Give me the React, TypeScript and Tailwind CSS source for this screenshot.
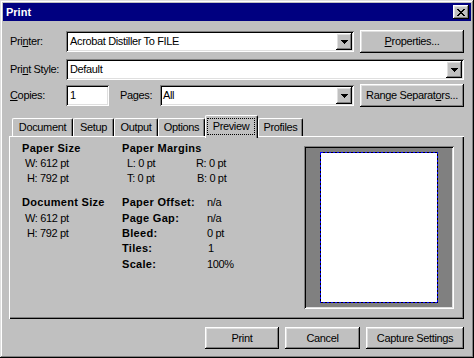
import React from "react";

const raised =
  "shadow-[inset_-1px_-1px_#000,inset_1px_1px_#fff,inset_-2px_-2px_#808080,inset_2px_2px_#dfdfdf]";
const sunken =
  "shadow-[inset_1px_1px_#808080,inset_-1px_-1px_#fff,inset_2px_2px_#000,inset_-2px_-2px_#dfdfdf]";

function Arrow() {
  return (
    <svg width="7" height="4" viewBox="0 0 7 4" shapeRendering="crispEdges">
      <path d="M0 0h7v1H0zM1 1h5v1H1zM2 2h3v1H2zM3 3h1v1H3z" fill="#000" />
    </svg>
  );
}

function CloseGlyph() {
  return (
    <svg width="8" height="7" viewBox="0 0 8 7" shapeRendering="crispEdges">
      <path
        d="M0 0h2v1H0zM6 0h2v1H6zM1 1h2v1H1zM5 1h2v1H5zM2 2h4v1H2zM3 3h2v1H3zM2 4h4v1H2zM1 5h2v1H1zM5 5h2v1H5zM0 6h2v1H0zM6 6h2v1H6z"
        fill="#000"
      />
    </svg>
  );
}

function Combo({ w, children, pad }: { w: string; children: React.ReactNode; pad: string }) {
  return (
    <div className={`${w} h-[21px] flex bg-white p-[2px] ${sunken}`}>
      <div className={`flex-1 flex items-center ${pad} whitespace-nowrap`}>{children}</div>
      <div className={`w-[16px] h-[17px] flex items-center justify-center bg-[#c0c0c0] ${raised}`}>
        <Arrow />
      </div>
    </div>
  );
}

function Button({ w, h, children }: { w: string; h: string; children: React.ReactNode }) {
  return (
    <div className={`${w} ${h} flex items-center justify-center bg-[#c0c0c0] whitespace-nowrap ${raised}`}>
      {children}
    </div>
  );
}

function Tab({ w, children }: { w: string; children: React.ReactNode }) {
  return (
    <div
      className={`${w} h-[18px] flex items-center justify-center border-t border-l border-white border-r border-r-black rounded-t-[2px] shadow-[inset_-1px_0_#808080] whitespace-nowrap`}
    >
      {children}
    </div>
  );
}

function Paper() {
  return (
    <svg width="118" height="151" viewBox="0 0 118 151" shapeRendering="crispEdges">
      <rect x="0.5" y="0.5" width="117" height="150" fill="#fff" stroke="#000" strokeWidth="1" />
      <rect
        x="0.5"
        y="0.5"
        width="117"
        height="150"
        fill="none"
        stroke="#0000ff"
        strokeWidth="1"
        strokeDasharray="2 2"
      />
    </svg>
  );
}

const B = "font-bold tracking-[0.3px]";

export default function App() {
  return (
    <div
      className={`w-[474px] h-[358px] bg-[#c0c0c0] p-[3px] flex flex-col text-[11px] text-black tracking-[-0.35px] font-['Liberation_Sans',Arial,sans-serif] shadow-[inset_-1px_-1px_#000,inset_1px_1px_#dfdfdf,inset_-2px_-2px_#808080,inset_2px_2px_#fff]`}
    >
      {/* Title bar */}
      <div className="h-[18px] bg-[#000080] flex items-center justify-between pl-[3px] pr-[2px]">
        <span className="text-white font-bold tracking-normal">Print</span>
        <div className={`w-[16px] h-[14px] flex items-center justify-center bg-[#c0c0c0] ${raised}`}>
          <CloseGlyph />
        </div>
      </div>

      <div className="flex flex-col pl-[6px] pr-[7px]">
        {/* Row 1 */}
        <div className="mt-[9px] h-[23px] flex items-center">
          <div className="w-[57px] pl-[1px]">
            Pri<span className="underline underline-offset-[1px]">n</span>ter:
          </div>
          <Combo w="w-[288px]" pad="pl-[2px]">Acrobat Distiller To FILE</Combo>
          <div className="ml-[6px]">
            <Button w="w-[104px]" h="h-[23px]">
              <span>
                <span className="underline underline-offset-[1px]">P</span>roperties...
              </span>
            </Button>
          </div>
        </div>

        {/* Row 2 */}
        <div className="mt-[6px] h-[21px] flex items-center">
          <div className="w-[57px] pl-[1px]">
            Pri<span className="underline underline-offset-[1px]">n</span>t Style:
          </div>
          <Combo w="w-[398px]" pad="pl-[2px]">Default</Combo>
        </div>

        {/* Row 3 */}
        <div className="mt-[4px] h-[23px] flex items-center">
          <div className="w-[57px] pl-[1px]">
            <span className="underline underline-offset-[1px]">C</span>opies:
          </div>
          <div className={`w-[43px] h-[21px] bg-white flex items-center pl-[4px] ${sunken}`}>1</div>
          <div className="ml-[11px] w-[40px]">
            Pa<span className="underline underline-offset-[1px]">g</span>es:
          </div>
          <Combo w="w-[194px]" pad="pl-[1px]">All</Combo>
          <div className="ml-[6px]">
            <Button w="w-[104px]" h="h-[23px]">
              <span>
                Range Separat<span className="underline underline-offset-[1px]">o</span>rs...
              </span>
            </Button>
          </div>
        </div>

        {/* Tabs */}
        <div className="mt-[8px] h-[21px] flex items-end pl-[3px]">
          <Tab w="w-[61px]">Document</Tab>
          <Tab w="w-[41px]">Setup</Tab>
          <Tab w="w-[44px]">Output</Tab>
          <Tab w="w-[47px]">Options</Tab>
          <div className="relative z-10 w-[53px] h-[23px] -mb-[2px] bg-[#c0c0c0] border-t border-l border-white border-r border-r-black rounded-t-[2px] shadow-[inset_-1px_0_#808080] pl-[1px] pr-[2px] pt-[2px] pb-[3px] flex">
            <span className="flex-1 border border-dotted border-black flex items-center justify-center whitespace-nowrap">
              Preview
            </span>
          </div>
          <Tab w="w-[45px]">Profiles</Tab>
        </div>

        {/* Panel */}
        <div className="h-[183px] flex justify-between bg-[#c0c0c0] shadow-[inset_1px_1px_#fff,inset_-1px_-1px_#000,inset_-2px_-2px_#808080]">
          <div className="pl-[13px] pt-[5px] flex flex-col">
            <div className="h-[15px] flex items-center">
              <div className={`w-[100px] ${B}`}>Paper Size</div>
              <div className={B}>Paper Margins</div>
            </div>
            <div className="h-[15px] flex items-center">
              <div className="w-[100px] pl-[3px]">W: 612 pt</div>
              <div className="w-[74px] pl-[5px]">L: 0 pt</div>
              <div>R: 0 pt</div>
            </div>
            <div className="h-[15px] flex items-center">
              <div className="w-[100px] pl-[5px]">H: 792 pt</div>
              <div className="w-[75px] pl-[5px]">T: 0 pt</div>
              <div>B: 0 pt</div>
            </div>

            <div className="mt-[8px] h-[16px] flex items-center">
              <div className={`w-[100px] ${B}`}>Document Size</div>
              <div className={`w-[85px] ${B}`}>Paper Offset:</div>
              <div>n/a</div>
            </div>
            <div className="h-[16px] flex items-center">
              <div className="w-[100px] pl-[3px]">W: 612 pt</div>
              <div className={`w-[85px] ${B}`}>Page Gap:</div>
              <div>n/a</div>
            </div>
            <div className="h-[15px] flex items-center">
              <div className="w-[100px] pl-[5px]">H: 792 pt</div>
              <div className={`w-[85px] ${B}`}>Bleed:</div>
              <div>0 pt</div>
            </div>
            <div className="h-[15px] flex items-center">
              <div className="w-[100px]"></div>
              <div className={`w-[86px] ${B}`}>Tiles:</div>
              <div>1</div>
            </div>
            <div className="h-[16px] flex items-center">
              <div className="w-[100px]"></div>
              <div className={`w-[85px] ${B}`}>Scale:</div>
              <div>100%</div>
            </div>
          </div>

          <div
            className={`mt-[10px] mr-[10px] w-[150px] h-[163px] bg-[#808080] flex items-center justify-center ${sunken}`}
          >
            <Paper />
          </div>
        </div>

        {/* Bottom buttons */}
        <div className="mt-[8px] flex justify-end gap-[6px]">
          <Button w="w-[74px]" h="h-[22px]">Print</Button>
          <Button w="w-[75px]" h="h-[22px]">Cancel</Button>
          <Button w="w-[98px]" h="h-[22px]">Capture Settings</Button>
        </div>
      </div>
    </div>
  );
}
